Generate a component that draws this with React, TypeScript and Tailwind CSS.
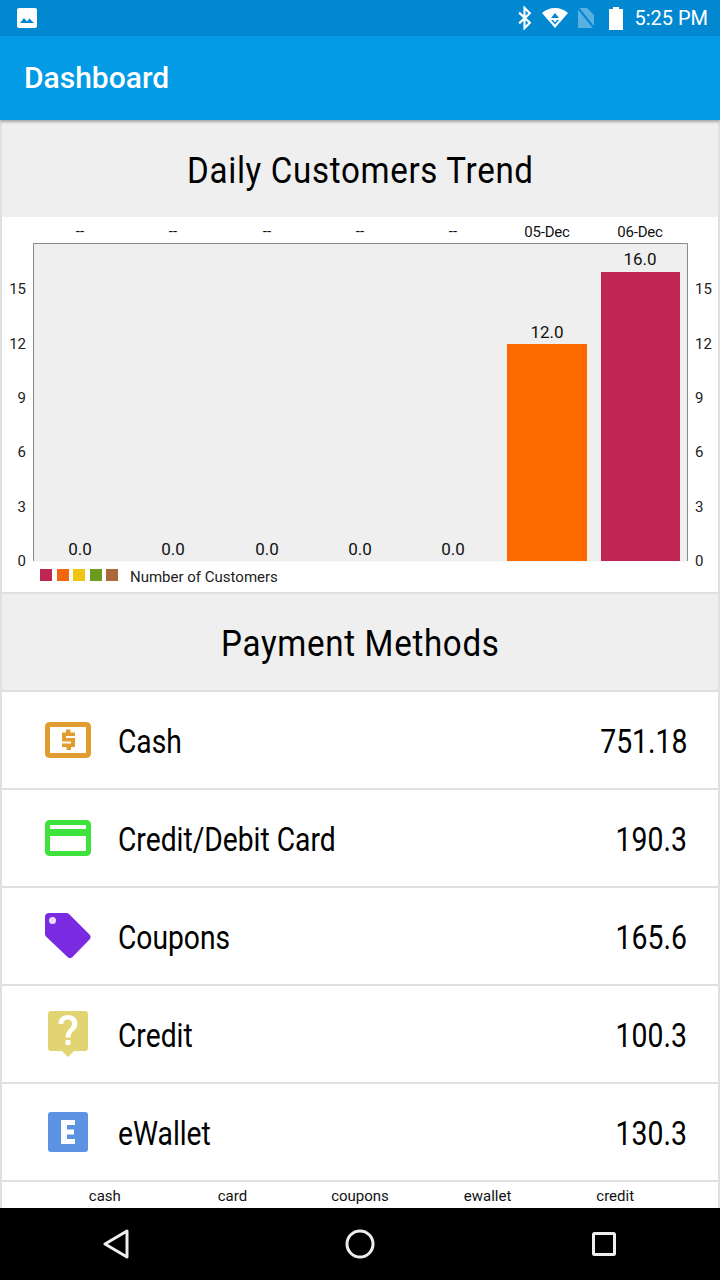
const rows = [
  { name: "Cash", value: "751.18", icon: <CashIcon /> },
  { name: "Credit/Debit Card", value: "190.3", icon: <CardIcon /> },
  { name: "Coupons", value: "165.6", icon: <TagIcon /> },
  { name: "Credit", value: "100.3", icon: <CreditIcon /> },
  { name: "eWallet", value: "130.3", icon: <WalletIcon /> },
];

function CashIcon() {
  return (
    <svg width="46" height="36" viewBox="0 0 46 36">
      <rect x="2.500" y="2.500" width="41" height="31" rx="2" fill="none" stroke="#e09c2e" strokeWidth="5" />
      <path d="M30 14v-3.500h-4.500v-3h-4.500v3h-4v9h9v2h-9v3.500h4.500v3h4.500v-3h4v-9h-9v-2z" fill="#e09c2e" />
    </svg>
  );
}

function CardIcon() {
  return (
    <svg width="46" height="36" viewBox="0 0 46 36">
      <rect x="2.500" y="2.500" width="41" height="31" rx="2" fill="none" stroke="#3de23d" strokeWidth="5" />
      <rect x="2" y="9" width="42" height="7" fill="#3de23d" />
    </svg>
  );
}

function TagIcon() {
  return (
    <svg width="46" height="46" viewBox="0 0 46 46">
      <path d="M4 0h17c1.500 0 2.500.5 3.500 1.500l20 20c1.500 1.500 1.500 3.500 0 5l-17 17.500c-1.500 1.500-3.500 1.500-5 0l-21-20c-1-1-1.500-2-1.500-3.500v-17c0-2 2-3.500 4-3.500z" fill="#7a2be2" />
      <circle cx="7.500" cy="7.500" r="3.500" fill="#eadcfb" />
    </svg>
  );
}

function CreditIcon() {
  return (
    <svg width="40" height="46" viewBox="0 0 40 46">
      <path d="M3 0h34a3 3 0 0 1 3 3v34a3 3 0 0 1-3 3h-11l-6 6-6-6h-11a3 3 0 0 1-3-3v-34a3 3 0 0 1 3-3z" fill="#e2d472" />
      <path d="M10.500 13c0-6 4-9 9.500-9s9.500 3.500 9.500 8.500c0 7-7 7-7 14h-5c0-8 6.500-8.500 6.500-14 0-2.500-1.800-4-4.300-4-2.600 0-4.400 1.700-4.500 4.500z" fill="#fff" />
      <rect x="17.500" y="29" width="5" height="5" rx="1" fill="#fff" />
    </svg>
  );
}

function WalletIcon() {
  return (
    <svg width="40" height="40" viewBox="0 0 40 40">
      <rect width="40" height="40" rx="3" fill="#5b92e2" />
      <path d="M13 8h14v5h-8v4.500h7v5h-7v4.500h8v5h-14z" fill="#fff" />
    </svg>
  );
}

const dashes = [80, 173, 267, 360, 453];

function TrendChart() {
  return (
    <svg width="716" height="375" viewBox="2 217 716 375" fontFamily="Roboto, sans-serif" className="block bg-white shrink-0">
      <rect x="33.500" y="243.500" width="654" height="318" fill="#efefef" />
      <path d="M33.500 561V243.500H687.500V561" fill="none" stroke="#8a8a8a" />
      {dashes.map((x) => (
        <text key={x} x={x} y="236" textAnchor="middle" fontSize="15" fill="#111">
          --
        </text>
      ))}
      <text x="547" y="237" textAnchor="middle" fontSize="15" letterSpacing="-0.2" fill="#111">
        05-Dec
      </text>
      <text x="640" y="237" textAnchor="middle" fontSize="15" letterSpacing="-0.2" fill="#111">
        06-Dec
      </text>
      {[
        ["15", 294],
        ["12", 349],
        ["9", 403],
        ["6", 457],
        ["3", 512],
        ["0", 566],
      ].map(([label, y]) => (
        <g key={label} fontSize="15" fill="#222">
          <text x="26" y={y} textAnchor="end">
            {label}
          </text>
          <text x="695" y={y}>{label}</text>
        </g>
      ))}
      <rect x="507" y="344" width="80" height="217" fill="#ff6a00" />
      <rect x="601" y="272" width="79" height="289" fill="#c02653" />
      {dashes.map((x) => (
        <text key={x} x={x} y="555" textAnchor="middle" fontSize="17" fill="#111">
          0.0
        </text>
      ))}
      <text x="547" y="338" textAnchor="middle" fontSize="17" fill="#111">
        12.0
      </text>
      <text x="640" y="265" textAnchor="middle" fontSize="17" fill="#111">
        16.0
      </text>
      {[
        ["#c02653", 40],
        ["#f0670f", 57],
        ["#f1c40f", 73],
        ["#6b9a1f", 90],
        ["#a9673a", 106],
      ].map(([color, x]) => (
        <rect key={color} x={x} y="569" width="12" height="12" fill={color} />
      ))}
      <text x="130" y="582" fontSize="15" fill="#222">
        Number of Customers
      </text>
    </svg>
  );
}

function SectionTitle({ children, tall }: { children: string; tall?: boolean }) {
  return (
    <div className={tall ? "h-[96px] shrink-0 pt-[4px] flex items-center justify-center bg-[#efefef]" : "h-[95px] shrink-0 pt-[2px] flex items-center justify-center bg-[#efefef]"}>
      <h2 className="text-[36px] leading-none tracking-[0.73px] text-black whitespace-nowrap [transform:scaleX(0.92)]">
        {children}
      </h2>
    </div>
  );
}

export default function App() {
  return (
    <div className="w-[720px] h-[1280px] flex flex-col overflow-hidden bg-white font-['Roboto',sans-serif]">
      <div className="h-9 shrink-0 bg-[#0288d1] flex items-center justify-between pl-[17px] pr-[12px]">
        <svg width="20" height="20" viewBox="0 0 20 20">
          <rect width="20" height="20" rx="2" fill="#fff" />
          <path d="M3 15l4-5 3 3.500 2.500-3 4.500 4.500z" fill="#0288d1" />
        </svg>
        <div className="flex items-center">
          <svg width="15" height="24" viewBox="0 0 14 22" className="mr-[9px]">
            <path d="M2 6l10 9.500-5 5V1.500l5 5L2 16" fill="none" stroke="#fff" strokeWidth="2" />
          </svg>
          <svg width="28" height="22" viewBox="0 0 26 22" className="mr-[7px]">
            <path d="M13 21L0 6C3 3 8 1 13 1s10 2 13 5z" fill="#fff" />
            <path d="M13 6l-4 5h8zM9 13h8l-4 4.500z" fill="#0288d1" />
            <path d="M11 13h4l-2 2.500z" fill="#fff" />
          </svg>
          <svg width="20" height="24" viewBox="0 0 20 24" className="mr-[12px]">
            <path d="M2 2h9l7 7v13H2z" fill="#fff" opacity=".35" />
            <path d="M2 2l17 21" stroke="#0288d1" strokeWidth="2" />
          </svg>
          <svg width="16" height="24" viewBox="0 0 14 24" className="mr-[10px]">
            <path d="M4 1h6v2h4v21H0V3h4z" fill="#fff" />
          </svg>
          <span className="text-white text-[20px] leading-none">5:25 PM</span>
        </div>
      </div>
      <div className="h-[84px] shrink-0 bg-[#039be5] flex items-center pl-6 z-10 shadow-[0_2px_3px_rgba(0,0,0,0.25)]">
        <h1 className="text-white text-[30px] font-medium leading-none">Dashboard</h1>
      </div>
      <main className="flex-1 min-h-0 px-[2px] pt-[2px] bg-[#e0e0e0] flex flex-col">
        <SectionTitle>Daily Customers Trend</SectionTitle>
        <TrendChart />
        <div className="h-[2px] shrink-0" />
        <SectionTitle tall>Payment Methods</SectionTitle>
        {rows.map((row) => (
          <div key={row.name} className="h-[96px] mt-[2px] shrink-0 bg-white flex items-center pl-[43px] pr-[31px]">
            <div className="w-[46px] flex justify-center">{row.icon}</div>
            <span className="ml-[27px] pt-[2px] text-[33px] leading-none text-black origin-left [transform:scaleX(0.855)]">
              {row.name}
            </span>
            <span className="ml-auto pt-[2px] text-[33px] leading-none text-black origin-right [transform:scaleX(0.86)]">
              {row.value}
            </span>
          </div>
        ))}
        <div className="flex-1 mt-[2px] bg-white text-[15px] text-[#111]">
          <div className="grid grid-cols-5 pt-[7px] px-[39px] text-center leading-none">
            <span>cash</span>
            <span>card</span>
            <span>coupons</span>
            <span>ewallet</span>
            <span>credit</span>
          </div>
        </div>
      </main>
      <nav className="h-[72px] shrink-0 bg-black flex items-center justify-between pl-[103px] pr-[103px]">
        <svg width="26" height="30" viewBox="0 0 26 30">
          <path d="M24 2L2 15l22 13z" fill="none" stroke="#eee" strokeWidth="3" strokeLinejoin="round" />
        </svg>
        <svg width="30" height="30" viewBox="0 0 30 30">
          <circle cx="15" cy="15" r="13" fill="none" stroke="#eee" strokeWidth="3" />
        </svg>
        <svg width="26" height="26" viewBox="0 0 26 26">
          <rect x="2.500" y="2.500" width="21" height="21" rx="1" fill="none" stroke="#eee" strokeWidth="3" />
        </svg>
      </nav>
    </div>
  );
}
